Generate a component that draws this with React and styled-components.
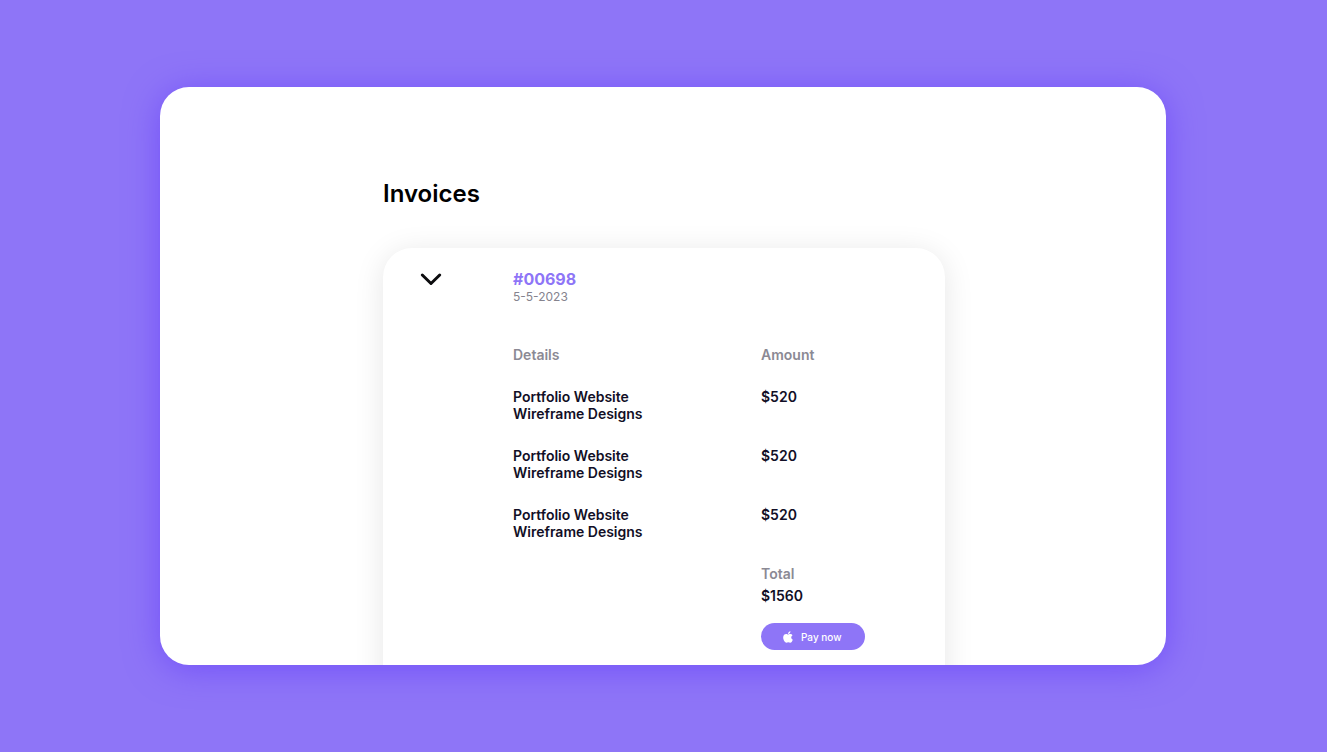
import React, { useState } from "react";
import styled, { createGlobalStyle } from "styled-components";

const GlobalStyle = createGlobalStyle`
  *, *::before, *::after { box-sizing: border-box; }
  body {
    margin: 0;
    background: #8e75f7;
    font-family: Inter, "Liberation Sans", sans-serif;
  }
  button { font-family: inherit; cursor: pointer; }
`;

const Page = styled.div`
  display: flex;
  height: 100vh;
  padding: 87px 161px 87px 160px;
`;

const Panel = styled.main`
  flex: 1;
  min-width: 0;
  padding: 92px 221px 0 223px;
  overflow: hidden;
  background: #ffffff;
  border-radius: 29px;
  box-shadow: 0 4px 34px #7351f8;
`;

const Title = styled.h1`
  margin: 0 0 40px;
  color: #000000;
  font-size: 24px;
  font-weight: 600;
  line-height: 29px;
`;

const Card = styled.article`
  display: grid;
  grid-template-columns: 94px 1fr;
  padding: 22px 36px 40px;
  background: #ffffff;
  border-radius: 29px;
  box-shadow: 0 4px 30px rgba(0, 0, 0, 0.1);
`;

const Toggle = styled.button`
  display: flex;
  align-self: start;
  justify-self: start;
  padding: 0;
  border: 0;
  background: none;
  color: #0c0c0e;
`;

const Heading = styled.header`
  display: flex;
  flex-direction: column;
  margin-bottom: 42px;
`;

const Number = styled.h2`
  margin: 0;
  color: #8e75f7;
  font-size: 16px;
  font-weight: 700;
  line-height: 19px;
`;

const IssueDate = styled.time`
  color: #85838e;
  font-size: 12px;
  line-height: 15px;
`;

const Lines = styled.table`
  width: 100%;
  border-collapse: collapse;
  table-layout: fixed;
  color: #120f26;
  font-size: 14px;
  font-weight: 600;
  line-height: 17px;
`;

const Column = styled.col`
  width: ${({ $width }) => $width || "auto"};
`;

const HeadCell = styled.th`
  padding: 0 0 25px;
  color: #8b8994;
  font-weight: 600;
  text-align: left;
`;

const Cell = styled.td`
  padding: 0 0 25px;
  vertical-align: top;
`;

const ItemName = styled.div`
  max-width: 140px;
`;

const Summary = styled.div`
  display: flex;
  flex-direction: column;
  align-items: flex-start;
  gap: 5px;
`;

const SummaryLabel = styled.span`
  color: #8b8994;
`;

const PayButton = styled.button`
  display: flex;
  align-items: center;
  gap: 8px;
  width: 104px;
  height: 27px;
  margin-top: 14px;
  padding: 0 22px;
  border: 0;
  border-radius: 14px;
  background: #8e75f7;
  color: #ffffff;
  font-size: 10px;
  font-weight: 500;
  line-height: 12px;
  white-space: nowrap;
`;

const ChevronIcon = () => (
  <svg width="24" height="20" viewBox="0 0 24 20" fill="none" aria-hidden="true">
    <path d="M3.300 5 L12 13.500 L20.700 5" stroke="currentColor" strokeWidth="3" strokeLinecap="round" strokeLinejoin="round" />
  </svg>
);

const AppleIcon = () => (
  <svg width="10" height="12" viewBox="0 0 384 468" fill="currentColor" aria-hidden="true">
    <path d="M318.700 246.700c-.2-36.700 16.400-64.400 50-84.800-18.800-26.900-47.200-41.700-84.700-44.600-35.500-2.800-74.300 20.700-88.500 20.700-15 0-49.400-19.700-76.400-19.700C63.300 119.200 4 163.100 4 252.400q0 39.600 14.400 81.200c12.800 36.700 59 126.700 107.200 125.200 25.200-.6 43-17.900 75.800-17.900 31.800 0 48.300 17.900 76.400 17.900 48.600-.7 90.400-82.500 102.600-119.300-65.200-30.700-61.700-90-61.700-92.900zM262 82.500c27.300-32.500 24.800-62 24-72.500-24.100 1.400-52 16.400-67.900 34.900-17.500 19.800-27.800 44.300-25.600 71.900 26.100 2 49.900-11.400 69.500-34.300z" />
  </svg>
);

const items = [
  { id: 1, name: "Portfolio Website Wireframe Designs", amount: 520 },
  { id: 2, name: "Portfolio Website Wireframe Designs", amount: 520 },
  { id: 3, name: "Portfolio Website Wireframe Designs", amount: 520 },
];

export default function App() {
  const [open, setOpen] = useState(true);
  const total = items.reduce((sum, item) => sum + item.amount, 0);

  return (
    <>
      <GlobalStyle />
      <Page>
        <Panel>
          <Title>Invoices</Title>
          <Card>
            <Toggle type="button" aria-label="Toggle invoice details" aria-expanded={open} onClick={() => setOpen(!open)}>
              <ChevronIcon />
            </Toggle>
            <div>
              <Heading>
                <Number>#00698</Number>
                <IssueDate dateTime="2023-05-05">5-5-2023</IssueDate>
              </Heading>
              {open && (
                <Lines>
                  <colgroup>
                    <Column $width="248px" />
                    <Column />
                  </colgroup>
                  <thead>
                    <tr>
                      <HeadCell scope="col">Details</HeadCell>
                      <HeadCell scope="col">Amount</HeadCell>
                    </tr>
                  </thead>
                  <tbody>
                    {items.map((item) => (
                      <tr key={item.id}>
                        <Cell>
                          <ItemName>{item.name}</ItemName>
                        </Cell>
                        <Cell>${item.amount}</Cell>
                      </tr>
                    ))}
                  </tbody>
                  <tfoot>
                    <tr>
                      <Cell />
                      <Cell>
                        <Summary>
                          <SummaryLabel>Total</SummaryLabel>
                          <span>${total}</span>
                          <PayButton type="button">
                            <AppleIcon />
                            Pay now
                          </PayButton>
                        </Summary>
                      </Cell>
                    </tr>
                  </tfoot>
                </Lines>
              )}
            </div>
          </Card>
        </Panel>
      </Page>
    </>
  );
}
